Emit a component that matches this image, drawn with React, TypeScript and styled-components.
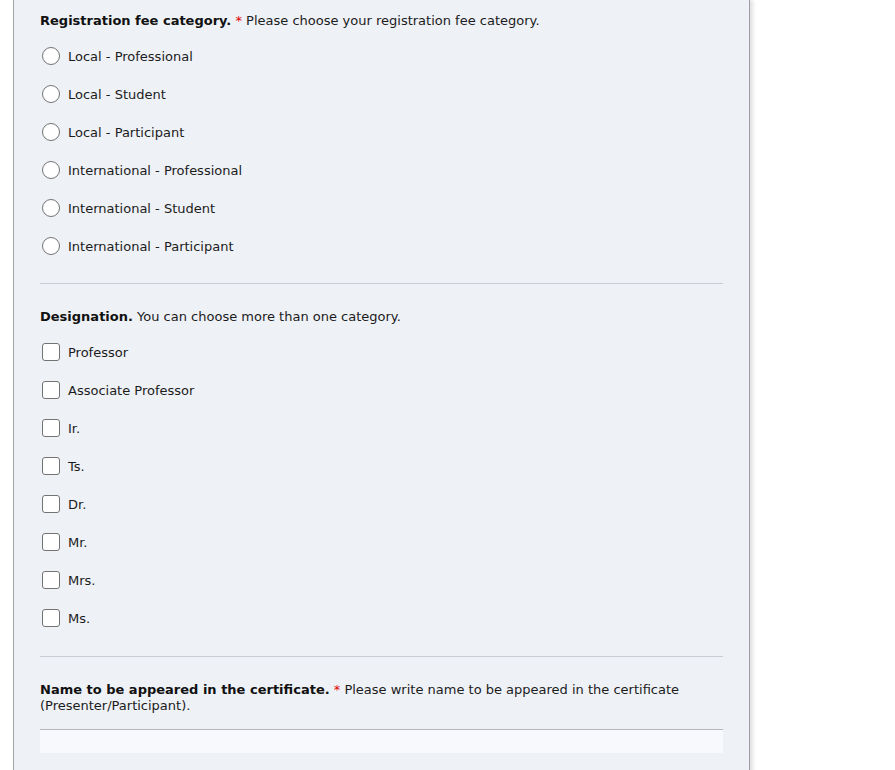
import React from 'react';
import styled, { createGlobalStyle } from 'styled-components';

const GlobalStyle = createGlobalStyle`
  html, body {
    margin: 0;
    padding: 0;
    background: #ffffff;
    overflow: hidden;
  }
  body {
    font-family: 'DejaVu Sans', Verdana, sans-serif;
    font-size: 13px;
    color: #1c1c1c;
  }
`;

const Page = styled.div`
  height: 770px;
  padding-left: 13px;
  overflow: hidden;
`;

const Panel = styled.div`
  width: 683px;
  min-height: 800px;
  background: #eef1f6;
  border-left: 1px solid #a3a3a3;
  border-right: 1px solid #9e9ea4;
  box-shadow: 3px 0 4px rgba(0, 0, 0, 0.12);
  padding: 13px 26px 0 26px;
`;

const Section = styled.section<{ $pad?: number }>`
  padding-bottom: ${p => p.$pad ?? 18}px;
  border-bottom: 1px solid #c9ccd2;
  margin-bottom: 25px;

  &:last-child {
    border-bottom: none;
  }
`;

const Question = styled.div`
  line-height: 16px;
`;

const Title = styled.b`
  font-weight: bold;
  color: #111111;
`;

const Required = styled.span`
  color: #e00000;
`;

const Options = styled.div`
  margin-top: 8px;
  display: flex;
  flex-direction: column;
`;

const Option = styled.label`
  height: 38px;
  display: flex;
  align-items: center;
  gap: 8px;
`;

const Radio = styled.input.attrs({ type: 'radio' })`
  appearance: none;
  margin: 0 0 0 2px;
  width: 18px;
  height: 18px;
  border: 1.5px solid #737373;
  border-radius: 50%;
  background: #ffffff;
  box-sizing: border-box;
`;

const Checkbox = styled.input.attrs({ type: 'checkbox' })`
  appearance: none;
  margin: 0 0 0 2px;
  width: 18px;
  height: 18px;
  border: 1.5px solid #737373;
  border-radius: 3px;
  background: #ffffff;
  box-sizing: border-box;
`;

const TextInput = styled.input`
  display: block;
  box-sizing: border-box;
  width: 100%;
  height: 24px;
  margin-top: 15px;
  border: none;
  border-top: 1px solid #b6b8bd;
  background: #f7f9fc;
  font: inherit;
`;

const fees = [
  'Local - Professional',
  'Local - Student',
  'Local - Participant',
  'International - Professional',
  'International - Student',
  'International - Participant',
];

const titles = ['Professor', 'Associate Professor', 'Ir.', 'Ts.', 'Dr.', 'Mr.', 'Mrs.', 'Ms.'];

const App: React.FC = () => {
  return (
    <Page>
      <GlobalStyle />
      <Panel>
        <Section $pad={18}>
          <Question>
            <Title>Registration fee category.</Title> <Required>*</Required> Please choose your registration fee category.
          </Question>
          <Options>
            {fees.map(f => (
              <Option key={f}>
                <Radio name="fee" />
                {f}
              </Option>
            ))}
          </Options>
        </Section>

        <Section $pad={19}>
          <Question>
            <Title>Designation.</Title> You can choose more than one category.
          </Question>
          <Options>
            {titles.map(t => (
              <Option key={t}>
                <Checkbox />
                {t}
              </Option>
            ))}
          </Options>
        </Section>

        <Section>
          <Question>
            <Title>Name to be appeared in the certificate.</Title> <Required>*</Required> Please write name to be
            appeared in the certificate (Presenter/Participant).
          </Question>
          <TextInput type="text" />
        </Section>
      </Panel>
    </Page>
  );
};

export default App;
